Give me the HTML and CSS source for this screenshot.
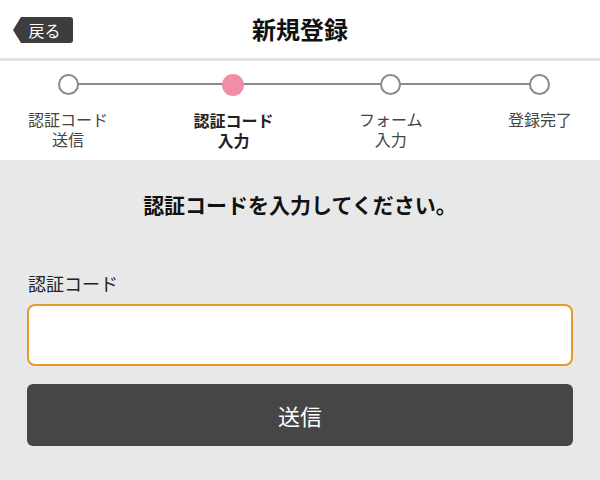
FILE: index.html
```
<!DOCTYPE html>
<html lang="ja">
<head>
<meta charset="utf-8">
<link rel="stylesheet" href="styles.css">
</head>
<body>
<header class="topbar">
  <div class="topbar-left"><a class="back-btn">戻る</a></div>
  <h1 class="title">新規登録</h1>
  <div class="topbar-right"></div>
</header>
<nav class="steps">
  <div class="step">
    <span class="dot"></span>
    <span class="step-label"><span class="line">認証コード</span><span class="line">送信</span></span>
  </div>
  <div class="step step-active">
    <span class="dot"></span>
    <span class="step-label"><span class="line">認証コード</span><span class="line">入力</span></span>
  </div>
  <div class="step">
    <span class="dot"></span>
    <span class="step-label"><span class="line">フォーム</span><span class="line">入力</span></span>
  </div>
  <div class="step">
    <span class="dot"></span>
    <span class="step-label"><span class="line">登録完了</span></span>
  </div>
</nav>
<main class="content">
  <p class="lead">認証コードを入力してください。</p>
  <label class="field-label" for="code">認証コード</label>
  <input class="field-input" id="code" type="text">
  <button class="submit-btn" type="button">送信</button>
</main>
</body>
</html>
```
FILE: styles.css
```
* { box-sizing: border-box; }
html, body { margin: 0; padding: 0; }
body {
  font-family: "Noto Sans CJK JP", "Noto Sans", sans-serif;
  background: #e8e8e8;
  color: #222;
  min-height: 480px;
}
.topbar {
  display: grid;
  grid-template-columns: 1fr auto 1fr;
  align-items: center;
  height: 58px;
  background: #fff;
}
.topbar-left { padding-left: 13px; padding-top: 2px; }
.back-btn {
  display: flex;
  align-items: center;
  justify-content: center;
  width: 60px;
  height: 26px;
  padding-left: 3px;
  background: #3d3d3d;
  color: #fff;
  font-size: 16px;
  line-height: 20px;
  border-radius: 0 3px 3px 0;
  clip-path: polygon(8px 0, 100% 0, 100% 100%, 8px 100%, 0 50%);
}
.title {
  margin: 0;
  font-size: 24px;
  font-weight: 700;
  color: #111;
  line-height: 30px;
}
.steps {
  position: relative;
  display: flex;
  justify-content: space-between;
  padding: 13px 28px 10px;
  background: #fff;
  border-top: 3px solid #e2e2e2;
}
.steps::before {
  content: "";
  position: absolute;
  left: 67px;
  right: 60px;
  top: 22px;
  height: 2px;
  background: #8a8a8a;
}
.step {
  display: flex;
  flex-direction: column;
  align-items: center;
  position: relative;
}
.dot {
  width: 21px;
  height: 21px;
  border-radius: 50%;
  border: 2px solid #8a8a8a;
  background: #fff;
}
.step-active .dot {
  border: none;
  width: 22px;
  height: 22px;
  background: #ef8ea6;
}
.step-label {
  display: flex;
  flex-direction: column;
  align-items: center;
  margin-top: 14px;
  font-size: 16px;
  color: #444;
  white-space: nowrap;
}
.line {
  display: block;
  height: 20px;
  line-height: 20px;
}
.step-active .step-label {
  font-weight: 700;
  color: #222;
}
.content {
  display: flex;
  flex-direction: column;
  padding: 29px 27px 30px;
  background: #e8e8e8;
}
.lead {
  margin: 0;
  text-align: center;
  font-size: 21px;
  font-weight: 700;
  line-height: 30px;
  color: #111;
}
.field-label {
  margin-top: 52px;
  font-size: 18px;
  line-height: 24px;
  color: #222;
  padding-left: 1px;
}
.field-input {
  margin-top: 9px;
  height: 62px;
  width: 100%;
  border: 2px solid #e39a28;
  border-radius: 8px;
  background: #fff;
  font-size: 18px;
  padding: 0 12px;
  outline: none;
}
.submit-btn {
  margin-top: 18px;
  height: 62px;
  width: 100%;
  border: none;
  border-radius: 6px;
  background: #464646;
  color: #fff;
  font-family: inherit;
  font-size: 22px;
}
```
